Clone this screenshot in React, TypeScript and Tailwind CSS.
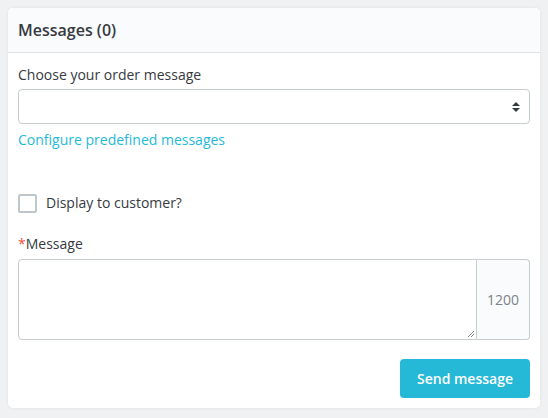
export default function App() {
  return (
    <div
      className="w-[548px] h-[418px] bg-[#eff1f2] p-2 text-[#363a41]"
      style={{ fontFamily: '"Open Sans", "Noto Sans", sans-serif' }}
    >
      <div className="w-[532px] h-[400px] bg-white rounded-[5px] shadow-[0_0_4px_0_rgba(0,0,0,0.06)] flex flex-col">
        {/* Header */}
        <div className="h-[45px] bg-[#fafbfc] border-b border-[#dfe3e5] rounded-t-[5px] flex items-center px-[10px]">
          <h3 className="text-[16px] font-semibold leading-none">Messages (0)</h3>
        </div>

        {/* Body */}
        <div className="px-[10px] pt-[12px] flex flex-col">
          <label className="text-[14px] leading-[20px] mb-[4px]">Choose your order message</label>
          <div className="relative h-[35px] border border-[#c7cccf] rounded-[4px] bg-white">
            <svg
              className="absolute right-[8px] top-[11px]"
              width="10"
              height="12"
              viewBox="0 0 10 12"
            >
              <path d="M5 1 L9 5 H1 Z" fill="#363a41" />
              <path d="M5 11 L9 7 H1 Z" fill="#363a41" />
            </svg>
          </div>
          <a className="text-[14px] leading-[20px] text-[#25b9d7] mt-[6px]">Configure predefined messages</a>

          <div className="flex items-center mt-[43px]">
            <div className="w-[19px] h-[19px] border-2 border-[#bfc6c9] rounded-[2px] bg-white"></div>
            <span className="text-[14px] leading-[20px] ml-[9px]">Display to customer?</span>
          </div>

          <label className="text-[14px] leading-[20px] mt-[21px] mb-[5px]">
            <span className="text-[#f54c3e]">*</span>Message
          </label>
          <div className="flex h-[81px]">
            <div className="flex-1 border border-[#c7cccf] rounded-l-[4px] relative">
              <svg className="absolute right-[1px] bottom-[1px]" width="8" height="8" viewBox="0 0 8 8">
                <path d="M7 1 L1 7 M7 4 L4 7" stroke="#888" strokeWidth="1" />
              </svg>
            </div>
            <div className="w-[53px] bg-[#fafbfc] border border-l-0 border-[#c7cccf] rounded-r-[4px] flex items-center justify-center text-[14px] text-[#7c8285]">
              1200
            </div>
          </div>

          <div className="flex justify-end mt-[19px]">
            <button className="h-[39px] w-[130px] bg-[#25b9d7] rounded-[4px] text-white text-[14px] font-semibold">
              Send message
            </button>
          </div>
        </div>
      </div>
    </div>
  );
}
